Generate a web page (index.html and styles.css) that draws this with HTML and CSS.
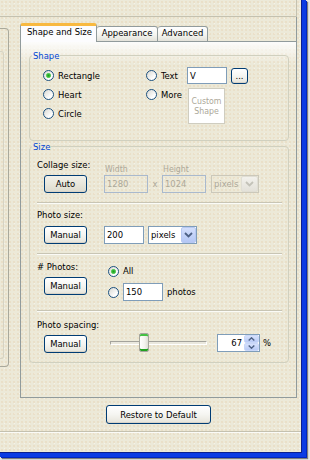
FILE: index.html
```html
<!DOCTYPE html>
<html>
<head>
<meta charset="utf-8">
<link rel="stylesheet" href="styles.css">
</head>
<body>
<div class="frame">
  <div class="window">
    <div class="top"></div>
    <div class="main">
      <div class="side"><div class="side-inner"></div></div>
      <div class="tabs-col">
        <div class="tabstrip">
          <div class="tab sel">Shape and Size</div>
          <div class="tab t-app">Appearance</div>
          <div class="tab t-adv">Advanced</div>
          <div class="tab-fill"></div>
        </div>
        <div class="panel">
          <fieldset class="group g-shape">
            <legend>Shape</legend>
            <div class="shape-grid">
              <div class="radio"><span class="rb on"></span>Rectangle</div>
              <div class="radio"><span class="rb"></span>Text</div>
              <div class="input txt">V</div>
              <div class="btn dots">...</div>
              <div class="radio"><span class="rb"></span>Heart</div>
              <div class="radio"><span class="rb"></span>More</div>
              <div class="custom"><span>Custom</span><span>Shape</span></div>
              <div class="radio r-circle"><span class="rb"></span>Circle</div>
            </div>
          </fieldset>
          <fieldset class="group g-size">
            <legend>Size</legend>
            <div class="sec s1">
              <div class="lbl l-collage">Collage size:</div>
              <div class="dlbl l-w">Width</div>
              <div class="dlbl l-h">Height</div>
              <div class="btn b-auto">Auto</div>
              <div class="input dis i-w">1280</div>
              <div class="times">x</div>
              <div class="input dis i-h">1024</div>
              <div class="select dis s-dis"><span class="sel-text">pixels</span><span class="arrow"><svg width="9" height="6" viewBox="0 0 9 6"><path d="M1 1 L4.5 4.5 L8 1" fill="none" stroke="#C3C2B8" stroke-width="1.8"/></svg></span></div>
            </div>
            <div class="sec s2">
              <div class="lbl">Photo size:</div>
              <div class="row">
                <div class="btn">Manual</div>
                <div class="input i-200">200</div>
                <div class="select s-px"><span class="sel-text">pixels</span><span class="arrow"><svg width="9" height="6" viewBox="0 0 9 6"><path d="M1 1 L4.5 4.5 L8 1" fill="none" stroke="#4D6185" stroke-width="1.8"/></svg></span></div>
              </div>
            </div>
            <div class="sec s3">
              <div class="col-l">
                <div class="lbl">#&nbsp;Photos:</div>
                <div class="btn">Manual</div>
              </div>
              <div class="col-r">
                <div class="radio"><span class="rb on"></span>All</div>
                <div class="radio-row"><span class="rb"></span><div class="input i-150">150</div><span class="photos">photos</span></div>
              </div>
            </div>
            <div class="sec s4">
              <div class="lbl">Photo spacing:</div>
              <div class="row">
                <div class="btn">Manual</div>
                <div class="slider"><div class="track"></div><div class="thumb"></div></div>
                <div class="spin"><span class="val">67</span><span class="spin-btns"><span class="sb"><svg width="7" height="4" viewBox="0 0 7 4"><path d="M0.7 3.5 L3.5 0.8 L6.3 3.5" fill="none" stroke="#4D6185" stroke-width="1.4"/></svg></span><span class="sb"><svg width="7" height="4" viewBox="0 0 7 4"><path d="M0.7 0.5 L3.5 3.2 L6.3 0.5" fill="none" stroke="#4D6185" stroke-width="1.4"/></svg></span></span></div>
                <span class="pct">%</span>
              </div>
            </div>
          </fieldset>
        </div>
        <div class="restore-row"><div class="btn b-restore">Restore to Default</div></div>
      </div>
    </div>
    <div class="bottom"></div>
  </div>
</div>
</body>
</html>
```
FILE: styles.css
```css
* { box-sizing: border-box; }
html, body { margin: 0; padding: 0; }
body {
  width: 310px;
  height: 460px;
  overflow: hidden;
  background: #E6E6E4;
  font-family: "DejaVu Sans Condensed", "DejaVu Sans", sans-serif;
  font-stretch: condensed;
  font-size: 9.4px;
  line-height: 12px;
  color: #000;
}
.frame {
  width: 306px;
  height: 457px;
  border-right: 4px solid #0B3BE3;
  border-bottom: 4px solid #0B3BE3;
  box-shadow: 1px 1px 0 #0026C0, 2px 2px 1px rgba(0,0,0,0.45);
}
.window {
  width: 302px;
  height: 453px;
  border-right: 1px solid #0A1F8F;
  border-bottom: 1px solid #0A1F8F;
  background-color: #ECE9D8;
  background-image:
    radial-gradient(rgba(222,170,120,0.22) 0.6px, transparent 1px),
    radial-gradient(rgba(255,255,255,0.45) 0.6px, transparent 1px);
  background-size: 4px 4px, 5px 5px;
  background-position: 0 0, 2px 1px;
}
.top {
  width: 297px;
  height: 17px;
  border-bottom: 1px solid #C4C1B0;
  border-right: 1px solid #C4C1B0;
}
.main { display: flex; height: 414px; }
.side {
  width: 9px;
  height: 339px;
  margin-top: 11px;
  border: 1px solid #A9A99C;
  border-left: 0;
  border-radius: 0 4px 4px 0;
  padding-top: 22px;
}
.side-inner {
  width: 4px;
  height: 308px;
  border: 1px solid #D6D3C3;
  border-left: 0;
  border-radius: 0 3px 3px 0;
}
.tabs-col {
  margin-left: 11px;
  width: 277px;
  display: flex;
  flex-direction: column;
}
.tabstrip {
  height: 25px;
  display: flex;
  align-items: flex-end;
  border-right: 1px solid #919B9C;
}
.tab {
  height: 16px;
  border: 1px solid #919B9C;
  border-left: 0;
  border-radius: 3px 3px 0 0;
  background: linear-gradient(#FFFFFF, #F4F4F0 55%, #E3E2DA);
  text-align: center;
  line-height: 12px;
  white-space: nowrap;
}
.tab.sel {
  width: 77px;
  height: 19px;
  border-left: 1px solid #919B9C;
  border-bottom: 0;
  border-top: 3px solid #F8B940;
  background: #FCFCFE;
  text-align: left;
  padding-left: 6px;
}
.t-app { width: 61px; }
.t-adv { width: 50px; }
.tab-fill { flex: 1; height: 1px; border-bottom: 1px solid #919B9C; }
.panel {
  height: 356px;
  border: 1px solid #919B9C;
  border-top: 0;
  background: linear-gradient(#FCFCFB, rgba(236,233,216,0) 22px);
  padding-top: 8px;
}
.group {
  margin: 0 0 0 8px;
  width: 260px;
  min-width: 0;
  border: 1px solid #D0D0BF;
  border-radius: 4px;
}
.group legend {
  color: #0046D5;
  padding: 0 1px;
  margin-left: 2px;
  line-height: 11px;
}
.g-shape { padding: 5px 0 17px 0; }
.g-size { padding: 7px 0 9px 0; }

.shape-grid {
  margin-left: 13px;
  display: grid;
  grid-template-columns: 103px 41px 44px 17px;
  grid-template-rows: repeat(3, 19px);
  align-items: center;
}
.radio { display: flex; align-items: center; gap: 4px; height: 12px; white-space: nowrap; }
.r-circle { grid-row: 3; grid-column: 1; }
.rb {
  flex: none;
  width: 11px;
  height: 11px;
  border: 1px solid #1C5180;
  border-radius: 50%;
  background: linear-gradient(135deg, #D8D8D2, #FFFFFF 75%);
}
.rb.on {
  background:
    radial-gradient(circle, #1E9B1E 0, #3CBD3C 1.6px, #7BD67B 2.4px, rgba(255,255,255,0) 2.9px),
    linear-gradient(135deg, #D8D8D2, #FFFFFF 75%);
}
.input {
  height: 18px;
  border: 1px solid #7F9DB9;
  background: #FFFFFF;
  padding-left: 2px;
  line-height: 16px;
  white-space: nowrap;
}
.input.txt { width: 40px; height: 17px; line-height: 15px; }
.input.dis { background: transparent; border-color: #A9B9CD; color: #ACA899; }
.btn {
  width: 43px;
  height: 18px;
  border: 1px solid #003C74;
  border-radius: 3px;
  background: linear-gradient(#FFFFFF, #F5F5F1 50%, #E6E4DA);
  box-shadow: inset 0 -1px 0 #D8D3C8;
  display: flex;
  align-items: center;
  justify-content: center;
  white-space: nowrap;
}
.btn.dots { width: 17px; height: 16px; align-items: flex-end; line-height: 12px; padding-bottom: 1px; }
.custom {
  grid-column: 3;
  grid-row: 2 / 4;
  align-self: start;
  margin-top: 3px;
  margin-left: 1px;
  width: 37px;
  height: 36px;
  background: #FFFFFF;
  border: 1px solid #CFCDC0;
  color: #ACA899;
  font-size: 8.7px;
  line-height: 10px;
  display: flex;
  flex-direction: column;
  align-items: center;
  justify-content: center;
}

.sec {
  margin: 0 6px 0 7px;
  border-bottom: 1px solid #C8C5B4;
  box-shadow: 0 1px 0 rgba(255,255,255,0.8);
}
.sec.s4 { border-bottom: 0; box-shadow: none; }
.lbl { line-height: 12px; white-space: nowrap; }
.s1 {
  display: grid;
  grid-template-columns: 67px 44px 14px 44px 5px 48px;
  grid-template-rows: 16px 18px;
  padding-bottom: 9px;
}
.l-collage { grid-row: 1; grid-column: 1; align-self: start; }
.dlbl { grid-row: 1; align-self: end; font-size: 8.7px; line-height: 12px; color: #ACA899; padding-left: 1px; }
.l-w { grid-column: 2; }
.l-h { grid-column: 4; }
.b-auto { grid-row: 2; grid-column: 1; margin-left: 7px; background: linear-gradient(#F2F1EA, #E6E4D8 60%, #DDDBCE); }
.i-w { grid-row: 2; grid-column: 2; }
.times { grid-row: 2; grid-column: 3; color: #ACA899; text-align: center; line-height: 17px; }
.i-h { grid-row: 2; grid-column: 4; }
.s-dis { grid-row: 2; grid-column: 6; }
.select {
  display: flex;
  align-items: center;
  height: 18px;
  border: 1px solid #7F9DB9;
  background: #FFFFFF;
  white-space: nowrap;
}
.sel-text { flex: 1; padding-left: 2px; line-height: 16px; }
.select .arrow {
  width: 15px;
  height: 16px;
  border: 1px solid #B7C8F2;
  border-radius: 2px;
  background: linear-gradient(#D3DFFC, #B4C7F5);
  display: flex;
  align-items: center;
  justify-content: center;
}
.select.dis { background: transparent; border-color: #CBC8BA; color: #ACA899; }
.select.dis .arrow { width: 17px; border-color: #E0DED4; background: linear-gradient(#F2F1EC, #E3E1D9); }

.s2 { padding: 6px 0 9px 0; }
.row { display: flex; align-items: flex-start; }
.s2 .row { margin-top: 5px; }
.row .btn, .col-l .btn { margin-left: 7px; }
.i-200 { width: 40px; margin-left: 17px; }
.s-px { width: 49px; margin-left: 4px; }

.s3 { display: flex; padding: 7px 0 9px 0; }
.col-l { width: 71px; }
.col-l .btn { margin-top: 4px; }
.col-r { margin-top: 4px; }
.radio-row { display: flex; align-items: center; margin-top: 6px; height: 18px; }
.i-150 { width: 40px; margin-left: 4px; }
.photos { margin-left: 4px; }

.s4 { padding: 8px 0 0 0; }
.s4 .row { margin-top: 4px; }
.slider { position: relative; width: 97px; height: 19px; margin-left: 23px; margin-top: -2px; }
.track {
  margin-top: 8px;
  height: 4px;
  border: 1px solid;
  border-color: #A4A39C #FFFFFF #FFFFFF #A4A39C;
  background: #EAE8DE;
}
.thumb {
  position: absolute;
  left: 29px;
  top: 0;
  width: 10px;
  height: 19px;
  border: 1px solid #A5A59C;
  border-radius: 2px;
  background: linear-gradient(90deg, #FFFFFF, #F3F3EE 60%, #DEDED6);
  box-shadow: inset 0 2px 0 #45C045, inset 0 -2px 0 #21A121;
}
.spin {
  display: flex;
  width: 43px;
  height: 18px;
  margin-left: 10px;
  margin-top: -1px;
  border: 1px solid #7F9DB9;
  background: #FFFFFF;
}
.spin .val { flex: 1; text-align: right; padding-right: 2px; line-height: 16px; }
.spin-btns { width: 15px; display: flex; flex-direction: column; }
.sb {
  flex: 1;
  border: 1px solid #C9D7F8;
  border-radius: 2px;
  background: linear-gradient(#D6E1FC, #B8CAF5);
  display: flex;
  align-items: center;
  justify-content: center;
}
.pct { margin-left: 3px; line-height: 16px; }

.restore-row { height: 33px; display: flex; justify-content: center; padding-top: 7px; }
.b-restore { width: 105px; height: 19px; }
.bottom {
  height: 21px;
  border-top: 1px solid #C4C1B0;
  box-shadow: inset 0 1px 0 rgba(255,255,255,0.8);
}
```
